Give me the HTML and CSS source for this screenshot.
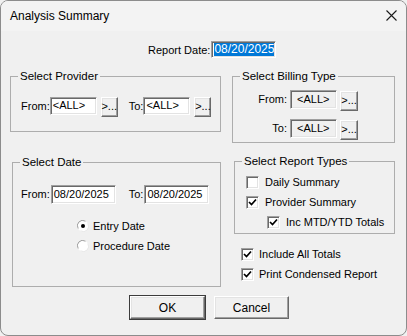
FILE: index.html
```html
<!DOCTYPE html>
<html lang="en">
<head>
  <meta charset="UTF-8">
  <title>Analysis Summary</title>
  <link rel="stylesheet" href="styles.css">
</head>
<body>
  <div class="window">
    <div class="titlebar">
      <span class="title">Analysis Summary</span>
      <svg class="close" width="11" height="11" viewBox="0 0 11 11">
        <path d="M0.5 0.5 L10.5 10.5 M10.5 0.5 L0.5 10.5" stroke="#1a1a1a" stroke-width="1.1" fill="none"/>
      </svg>
    </div>

    <div class="content">
      <div class="report-row">
        <span class="label">Report Date:</span>
        <span class="field report-date"><span class="selected">08/20/2025</span></span>
      </div>

      <div class="columns">
        <div class="col-left">
          <div class="group provider">
            <span class="group-title">Select Provider</span>
            <div class="row">
              <span class="label">From:</span>
              <span class="field small">&lt;ALL&gt;</span>
              <span class="btn dots">&gt;...</span>
              <span class="label to">To:</span>
              <span class="field small">&lt;ALL&gt;</span>
              <span class="btn dots">&gt;...</span>
            </div>
          </div>

          <div class="group dates">
            <span class="group-title">Select Date</span>
            <div class="row">
              <span class="label">From:</span>
              <span class="field date">08/20/2025</span>
              <span class="label to">To:</span>
              <span class="field date">08/20/2025</span>
            </div>
            <div class="radios">
              <div class="option">
                <svg class="radio" width="12" height="12" viewBox="0 0 12 12">
                  <circle cx="6" cy="6" r="5.5" fill="#fff"/>
                  <path d="M1.2 8.5 A5.3 5.3 0 0 1 8.5 1.2" stroke="#a0a0a0" fill="none"/>
                  <path d="M10.8 3.5 A5.3 5.3 0 0 1 3.5 10.8" stroke="#e8e8e8" fill="none"/>
                  <circle cx="6" cy="6" r="2" fill="#000"/>
                </svg>
                <span>Entry Date</span>
              </div>
              <div class="option">
                <svg class="radio" width="12" height="12" viewBox="0 0 12 12">
                  <circle cx="6" cy="6" r="5.5" fill="#fff"/>
                  <path d="M1.2 8.5 A5.3 5.3 0 0 1 8.5 1.2" stroke="#a0a0a0" fill="none"/>
                  <path d="M10.8 3.5 A5.3 5.3 0 0 1 3.5 10.8" stroke="#e8e8e8" fill="none"/>
                </svg>
                <span>Procedure Date</span>
              </div>
            </div>
          </div>
        </div>

        <div class="col-right">
          <div class="group billing">
            <span class="group-title">Select Billing Type</span>
            <div class="bill-row">
              <span class="label">From:</span>
              <span class="field disabled">&lt;ALL&gt;</span>
              <span class="btn dots">&gt;...</span>
            </div>
            <div class="bill-row">
              <span class="label">To:</span>
              <span class="field disabled">&lt;ALL&gt;</span>
              <span class="btn dots">&gt;...</span>
            </div>
          </div>

          <div class="group types">
            <span class="group-title">Select Report Types</span>
            <div class="check-row">
              <span class="check"></span>
              <span>Daily Summary</span>
            </div>
            <div class="check-row">
              <span class="check on"><svg width="9" height="9" viewBox="0 0 9 9"><path d="M1 4 L3.5 6.5 L8 1.5" stroke="#000" stroke-width="1.7" fill="none"/></svg></span>
              <span>Provider Summary</span>
            </div>
            <div class="check-row sub">
              <span class="check on"><svg width="9" height="9" viewBox="0 0 9 9"><path d="M1 4 L3.5 6.5 L8 1.5" stroke="#000" stroke-width="1.7" fill="none"/></svg></span>
              <span>Inc MTD/YTD Totals</span>
            </div>
          </div>

          <div class="extras">
            <div class="check-row">
              <span class="check on"><svg width="9" height="9" viewBox="0 0 9 9"><path d="M1 4 L3.5 6.5 L8 1.5" stroke="#000" stroke-width="1.7" fill="none"/></svg></span>
              <span>Include All Totals</span>
            </div>
            <div class="check-row">
              <span class="check on"><svg width="9" height="9" viewBox="0 0 9 9"><path d="M1 4 L3.5 6.5 L8 1.5" stroke="#000" stroke-width="1.7" fill="none"/></svg></span>
              <span>Print Condensed Report</span>
            </div>
          </div>
        </div>
      </div>

      <div class="actions">
        <span class="btn push default">OK</span>
        <span class="btn push">Cancel</span>
      </div>
    </div>
  </div>
</body>
</html>
```

FILE: styles.css
```css
body {
  margin: 0;
  background: #f0f0f0;
  font-family: 'Liberation Sans', Arial, sans-serif;
  font-size: 11px;
  color: #000;
}

.window {
  width: 407px;
  height: 336px;
  box-sizing: border-box;
  border: 1px solid #8c8c8c;
  border-radius: 8px;
  background: #f0f0f0;
  overflow: hidden;
}

.titlebar {
  height: 30px;
  display: flex;
  align-items: center;
  justify-content: space-between;
  padding: 0 9px 0 9px;
  background: #f3f3f3;
}

.title {
  font-family: 'Liberation Sans', Arial, sans-serif;
  font-size: 12px;
  color: #000;
}

.close {
  margin-top: -1px;
}

.content {
  padding: 10px 0 0 9px;
}

.label {
  line-height: 18px;
  white-space: nowrap;
}

/* sunken edit boxes */
.field {
  display: inline-block;
  box-sizing: border-box;
  height: 18px;
  line-height: 15px;
  padding: 0 2px;
  background: #fff;
  border: 1px solid;
  border-color: #a0a0a0 #fff #fff #a0a0a0;
  box-shadow: inset 1px 1px #696969, inset -1px -1px #e3e3e3;
  white-space: nowrap;
}

.report-row {
  display: flex;
  align-items: center;
  margin-left: 138px;
  height: 17px;
}

.report-date {
  width: 65px;
  height: 17px;
  margin-left: 1px;
  padding: 1px 2px;
  line-height: 13px;
}

.selected {
  display: inline-block;
  background: #0078d7;
  color: #fff;
  font-size: 12px;
  line-height: 13px;
}

/* raised buttons */
.btn {
  display: inline-flex;
  align-items: center;
  justify-content: center;
  box-sizing: border-box;
  background: #f0f0f0;
  border: 1px solid;
  border-color: #fff #696969 #696969 #fff;
  box-shadow: inset -1px -1px #a0a0a0, inset 1px 1px #e3e3e3;
}

.dots {
  width: 17px;
  height: 20px;
  padding-bottom: 2px;
}

.columns {
  display: flex;
  margin-top: 18px;
  height: 211px;
}

.col-left {
  width: 211px;
}

.col-right {
  width: 163px;
  margin-left: 11px;
}

.group {
  position: relative;
  box-sizing: border-box;
  border: 1px solid #adadad;
}

.group-title {
  position: absolute;
  top: -7px;
  left: 7px;
  padding: 0 2px;
  line-height: 13px;
  font-size: 11.5px;
  background: #f0f0f0;
}

.row {
  display: flex;
  align-items: flex-start;
}

.provider {
  height: 56px;
  padding: 20px 0 0 10px;
}

.provider .small {
  width: 47px;
}

.provider .dots {
  margin-left: 4px;
}

.provider .to {
  margin-left: 11px;
}

.dates {
  margin: 30px 0 0 2px;
  width: 209px;
  height: 125px;
  padding: 22px 0 0 8px;
}

.dates .field.date {
  width: 65px;
  height: 19px;
  margin-left: 1px;
  line-height: 16px;
}

.dates .label {
  line-height: 19px;
}

.dates .to {
  margin-left: 13px;
}

.radios {
  margin: 12px 0 0 56px;
}

.option {
  display: flex;
  align-items: center;
  height: 20px;
  gap: 4px;
}

.billing {
  height: 67px;
  padding-top: 13px;
}

.bill-row {
  display: grid;
  grid-template-columns: 54px 47px 18px;
  column-gap: 3px;
  align-items: start;
  margin-bottom: 8px;
}

.bill-row .label {
  text-align: right;
  line-height: 19px;
}

.disabled {
  height: 19px;
  line-height: 16px;
  background: #f0f0f0;
  padding-left: 6px;
}

.bill-row .dots {
  width: 18px;
  margin-top: 1px;
}

.types {
  margin: 18px 0 0 2px;
  width: 161px;
  height: 73px;
  padding: 10px 0 0 11px;
}

.check-row {
  display: flex;
  align-items: center;
  height: 20px;
  gap: 6px;
  white-space: nowrap;
}

.check-row.sub {
  margin-left: 21px;
}

.check {
  display: inline-flex;
  align-items: center;
  justify-content: center;
  box-sizing: border-box;
  width: 13px;
  height: 13px;
  background: #fff;
  border: 1px solid;
  border-color: #a0a0a0 #fff #fff #a0a0a0;
  box-shadow: inset 1px 1px #696969, inset -1px -1px #e3e3e3;
}

.extras {
  margin: 10px 0 0 9px;
}

.extras .check-row {
  gap: 5px;
}

.actions {
  display: flex;
  gap: 9px;
  margin: 9px 0 0 120px;
}

.push {
  width: 75px;
  height: 23px;
  font-size: 12px;
}

.default {
  outline: 1px solid #3c3c3c;
}
```
